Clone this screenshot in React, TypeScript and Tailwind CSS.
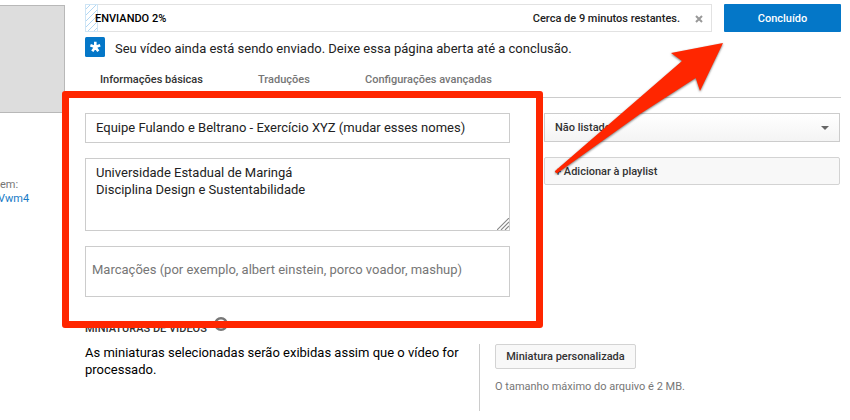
import React from 'react';

function UploadProgress() {
  return (
    <div className="flex h-7 w-[627px] items-center border border-[#e2e2e2] text-[11px] font-medium leading-7">
      <svg className="-my-px -ml-px h-7 w-[13px] shrink-0" viewBox="0 0 13 28">
        <defs>
          <pattern id="hatch" width="6" height="6" patternUnits="userSpaceOnUse">
            <path d="M-1 7L7 -1M-1 1L1 -1M5 7L7 5" stroke="#a9d3f2" strokeWidth="0.9" />
          </pattern>
        </defs>
        <rect x="0.5" y="0.5" width="12" height="27" fill="url(#hatch)" stroke="#cfe5f5" />
      </svg>
      <span className="-ml-[3px] pt-px text-[11px] text-black">ENVIANDO 2%</span>
      <span className="ml-auto pt-px text-[#222]">Cerca de 9 minutos restantes.</span>
      <svg className="ml-[15px] mr-2 mt-px size-2" viewBox="0 0 8 8">
        <path d="M1 1L7 7M7 1L1 7" stroke="#999" strokeWidth="2" />
      </svg>
    </div>
  );
}

function Notice() {
  return (
    <div className="mt-[5px] flex h-5 items-center">
      <svg className="size-5" viewBox="0 0 20 20">
        <rect width="20" height="20" rx="1.5" fill="#0477c8" />
        <path d="M10.3 4.7V10M5.4 8.2L10.3 10M15.2 8.2L10.3 10M7.3 14.2L10.3 10M13.3 14.2L10.3 10" stroke="#fff" strokeWidth="2.6" />
      </svg>
      <span className="ml-[10px] mt-[3px] text-[13px] leading-5 text-[#222]">
        Seu vídeo ainda está sendo enviado. Deixe essa página aberta até a conclusão.
      </span>
    </div>
  );
}

function Tabs() {
  return (
    <div className="flex h-[41px] w-[756px] border-b border-[#ccc] pl-[15px] pt-[15px] text-[11px] font-medium leading-4 text-[#767676]">
      <span className="w-[158px] text-[#333]">Informações básicas</span>
      <span className="w-[107px]">Traduções</span>
      <span>Configurações avançadas</span>
    </div>
  );
}

function Fields() {
  return (
    <div className="w-[425px] text-[13px] text-[#222]">
      <div className="h-[30px] border border-[#ccc] pl-[10px] leading-7">
        Equipe Fulando e Beltrano - Exercício XYZ (mudar esses nomes)
      </div>
      <div className="mt-[15px] flex h-[73px] items-end justify-between border border-[#ccc] pl-[10px]">
        <div className="self-start pt-[5px] leading-[17px]">
          Universidade Estadual de Maringá
          <br />
          Disciplina Design e Sustentabilidade
        </div>
        <svg className="size-3" viewBox="0 0 12 12">
          <path d="M0 12L12 0M4 12L12 4M8 12L12 8" stroke="#888" strokeWidth="1.1" />
        </svg>
      </div>
      <div className="mt-[15px] h-[51px] border border-[#ccc] pl-[6px] leading-[46px] text-[#767676]">
        Marcações (por exemplo, albert einstein, porco voador, mashup)
      </div>
    </div>
  );
}

function Options() {
  return (
    <div className="w-[296px] text-[11px] font-medium text-[#333]">
      <div className="flex h-[29px] items-center justify-between border border-[#ccc] bg-linear-to-b from-white to-[#f4f4f4] pl-[10px] pr-[10px]">
        <span className="pt-px">Não listado</span>
        <svg className="h-1 w-2" viewBox="0 0 8 4">
          <path d="M0 0H8L4 4Z" fill="#666" />
        </svg>
      </div>
      <div className="mt-[15px] h-7 rounded-[2px] border border-[#d3d3d3] bg-[#f8f8f8] pl-[10px] pt-px leading-[26px]">
        + Adicionar à playlist
      </div>
    </div>
  );
}

function Thumbnails() {
  return (
    <div className="mt-[22px]">
      <div className="flex h-[18px] items-center text-[11px] font-medium text-[#333]">
        <span className="pt-[2px]">MINIATURAS DE VÍDEOS</span>
        <svg className="-mt-[9px] ml-[7px] size-[14px]" viewBox="0 0 14 14">
          <circle cx="7" cy="7" r="5.7" fill="white" stroke="#777" strokeWidth="2.4" />
        </svg>
      </div>
      <div className="mt-[7px] flex">
        <p className="h-[67px] w-[395px] border-r border-[#ccc] text-[13px] leading-[17px] text-black">
          As miniaturas selecionadas serão exibidas assim que o vídeo for
          <br />
          processado.
        </p>
        <div className="pl-[15px] text-[11px]">
          <div className="flex h-[25px] w-[141px] items-center justify-center rounded-[2px] border border-[#d3d3d3] bg-[#f8f8f8] pt-[2px] font-medium text-[#333]">
            Miniatura personalizada
          </div>
          <p className="mt-[10px] leading-4 text-[#767676]">O tamanho máximo do arquivo é 2 MB.</p>
        </div>
      </div>
    </div>
  );
}

export default function App() {
  return (
    <div className="relative flex h-[420px] w-[850px] overflow-hidden whitespace-nowrap bg-white font-['Roboto',sans-serif]">
      <aside className="w-[85px] shrink-0 pt-[5px] text-[11px] leading-[14px] text-[#767676]">
        <div className="h-[108px] w-[65px] border-y border-r border-[#b8b8b8] bg-[#ddd]" />
        <div className="mt-[65px]">em:</div>
        <div className="-ml-[2px] text-[#167ac6]">Vwm4</div>
      </aside>
      <main className="w-[756px] shrink-0 pt-1">
        <div className="flex justify-between">
          <UploadProgress />
          <div className="flex h-7 w-[117px] items-center justify-center rounded-[1px] bg-[#0477c8] pt-[2px] text-[11px] font-medium text-white">
            Concluído
          </div>
        </div>
        <Notice />
        <Tabs />
        <div className="mt-[15px] flex gap-[34px]">
          <Fields />
          <Options />
        </div>
        <Thumbnails />
      </main>
      <div className="absolute left-[62px] top-[91px] h-[237px] w-[481px] rounded-[3px] border-[7px] border-[#ff2600]" />
      <svg className="absolute left-[540px] top-[30px] h-[160px] w-[200px] drop-shadow-[0_1px_1px_#0008]" viewBox="540 30 200 160">
        <path d="M555.3 170.7L682 61L671 53L723 43L700 91L695.7 78L640 114L557.5 173A1.8 1.8 0 0 1 555.3 170.7Z" fill="#ff2600" />
      </svg>
    </div>
  );
}
